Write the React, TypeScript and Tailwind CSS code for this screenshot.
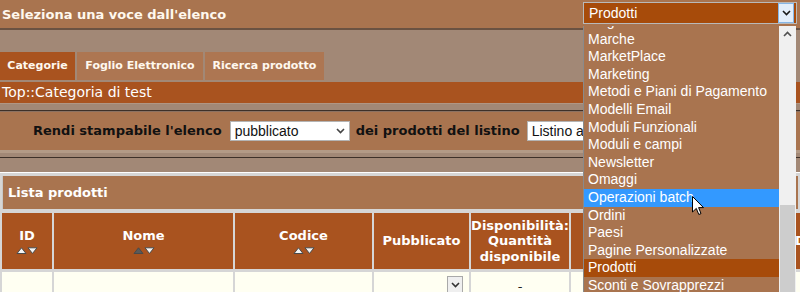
import React from "react"

const items = [
  "Lingue",
  "Marche",
  "MarketPlace",
  "Marketing",
  "Metodi e Piani di Pagamento",
  "Modelli Email",
  "Moduli Funzionali",
  "Moduli e campi",
  "Newsletter",
  "Omaggi",
  "Operazioni batch",
  "Ordini",
  "Paesi",
  "Pagine Personalizzate",
  "Prodotti",
  "Sconti e Sovrapprezzi",
]

function Chevron({ className = "" }: { className?: string }) {
  return (
    <svg width="9" height="6" viewBox="0 0 9 6" className={className}>
      <path d="M1 1 L4.5 4.5 L8 1" fill="none" stroke="currentColor" strokeWidth="1.6" />
    </svg>
  )
}

function SortArrows({ upDark = false }: { upDark?: boolean }) {
  return (
    <svg width="22" height="7" viewBox="0 0 22 7" className="mt-[3px]">
      <path d="M1 6.5 L5.5 0.8 L10 6.5 Z" fill={upDark ? "#5a5a5a" : "#f4f4f4"} stroke="#4a4a4a" strokeWidth="1" />
      <path d="M12 0.8 L21 0.8 L16.5 6.5 Z" fill="#f4f4f4" stroke="#4a4a4a" strokeWidth="1" />
    </svg>
  )
}

function HeadCell({ w, children }: { w: string; children?: React.ReactNode }) {
  return (
    <div className={`${w} shrink-0 h-full bg-[#a9531f] flex flex-col items-center justify-center text-center text-white font-bold text-[13px] leading-[15.5px]`}>
      {children}
    </div>
  )
}

export default function App() {
  return (
    <div className="relative w-[800px] h-[292px] overflow-hidden bg-[#a28876] font-['DejaVu_Sans',Verdana,sans-serif]">
      {/* top bar */}
      <div className="h-[30px] bg-[#a9744f] border-b-2 border-[#6a5242] flex items-start justify-between pl-[2px] pr-[3px]">
        <span className="mt-[5px] text-[#fff8ee] font-bold text-[13px]">Seleziona una voce dall'elenco</span>
        <div className="mt-[2px] w-[214px] h-[22px] border border-[#b9b9b9] bg-[#a74b0a] flex items-center justify-between font-['Liberation_Sans',Arial,sans-serif] text-[14px] text-white">
          <span className="pl-[5px]">Prodotti</span>
          <div className="w-[16px] h-[20px] mr-[2px] bg-[#e3eefa] border border-[#86b6e6] flex items-center justify-center text-[#1a1a1a]">
            <Chevron />
          </div>
        </div>
      </div>

      {/* tabs */}
      <div className="h-[22px]" />
      <div className="h-[28px] flex gap-[2px] text-[11px] font-bold text-[#fff8ee]">
        <div className="w-[75px] bg-[#a9531f] flex items-center justify-center">Categorie</div>
        <div className="w-[126px] bg-[#ad7652] flex items-center justify-center">Foglio Elettronico</div>
        <div className="w-[119px] bg-[#ad7652] flex items-center justify-center">Ricerca prodotto</div>
      </div>
      <div className="h-[2px]" />
      <div className="h-[21px] bg-[#a9531f] flex items-center pl-[2px] text-[14px] text-white">Top::Categoria di test</div>

      {/* print controls */}
      <div className="h-[7px] border-t border-[#b09684]" />
      <div className="h-[2px] bg-[#3e3028] border-b border-[#8c7262]" />
      <div className="h-[38px] bg-[#a9744f] flex items-center pl-[33px] text-[13px] font-bold text-[#111]">
        <span>Rendi stampabile l'elenco</span>
        <div className="ml-[8px] w-[120px] h-[20px] bg-white border border-[#b4b4b4] flex items-center justify-between px-[4px] font-normal font-['Liberation_Sans',Arial,sans-serif] text-[14px]">
          <span>pubblicato</span>
          <Chevron className="text-[#444]" />
        </div>
        <span className="ml-[6px]">dei prodotti del listino</span>
        <div className="ml-[7px] w-[160px] h-[20px] bg-white border border-[#b4b4b4] flex items-center px-[4px] font-normal font-['Liberation_Sans',Arial,sans-serif] text-[14px]">
          <span>Listino al pubblico</span>
        </div>
      </div>
      <div className="h-[3px] bg-[#b39a86]" />
      <div className="h-[4px]" />
      <div className="h-[1px] bg-[#3e3028]" />
      <div className="h-[14px]" />

      {/* product list */}
      <div className="border-t border-white bg-[#d6d6d6] pl-[2px] pt-[3px] flex flex-col">
        <div className="h-[33px] mr-[2px] bg-[#a9744f] border-l border-[#c8c8c8] flex items-center pl-[5px] text-[13px] font-bold text-white">Lista prodotti</div>
        <div className="h-[4px]" />
        <div className="h-[56px] flex gap-[2px]">
          <HeadCell w="w-[50px]">ID<SortArrows /></HeadCell>
          <HeadCell w="w-[179px]">Nome<SortArrows upDark /></HeadCell>
          <HeadCell w="w-[137px]">Codice<SortArrows /></HeadCell>
          <HeadCell w="w-[95px]">Pubblicato</HeadCell>
          <HeadCell w="w-[98px]">Disponibilità:<br />Quantità<br />disponibile</HeadCell>
          <HeadCell w="w-[220px]">Prezzo</HeadCell>
          <div className="w-[120px] shrink-0 h-full bg-[#a9531f] flex items-center pl-[2px] text-white font-bold text-[13px]">Data</div>
        </div>
        <div className="h-[3px]" />
        <div className="h-[30px] flex gap-[2px]">
          <div className="w-[50px] shrink-0 bg-[#fffff2]" />
          <div className="w-[179px] shrink-0 bg-[#fffff2]" />
          <div className="w-[137px] shrink-0 bg-[#fffff2]" />
          <div className="w-[95px] shrink-0 bg-[#fffff2] flex justify-end pr-[6px] pt-[4px]">
            <div className="w-[16px] h-[18px] bg-[#efefef] border border-[#a9a9a9] flex items-center justify-center text-[#333]">
              <Chevron />
            </div>
          </div>
          <div className="w-[98px] shrink-0 bg-[#fffff2] text-center text-[13px] pt-[5px] text-[#222]">-</div>
          <div className="w-[220px] shrink-0 bg-[#fffff2]" />
          <div className="w-[120px] shrink-0 bg-[#fffff2]" />
        </div>
      </div>

      {/* open select list */}
      <div className="absolute left-[583px] top-[26px] w-[213px] h-[266px] overflow-hidden bg-[#a9744f] border-l border-[#8a8a8a] font-['Liberation_Sans',Arial,sans-serif] text-[14px] text-white">
        <div className="mt-[-13px] mr-[17px]">
          {items.map((it) => (
            <div
              key={it}
              className={`h-[17.6px] leading-[17.6px] pl-[4px] whitespace-nowrap ${
                it === "Operazioni batch" ? "bg-[#3399ff]" : it === "Prodotti" ? "bg-[#a74b0a]" : ""
              }`}
            >
              {it}
            </div>
          ))}
        </div>
        <div className="absolute right-0 top-0 w-[17px] h-full bg-[#f0f0f0] flex flex-col">
          <div className="h-[16px] flex items-center justify-center text-[#505050]">
            <Chevron className="rotate-180" />
          </div>
          <div className="flex-1" />
          <div className="h-[87px] mx-[1px] bg-[#cdcdcd]" />
        </div>
      </div>

      {/* mouse pointer */}
      <svg className="absolute left-[692px] top-[196px]" width="13" height="21" viewBox="0 0 13 21">
        <path d="M0.5 0.5 L0.5 16 L4.3 12.4 L6.8 18.5 L9 17.6 L6.6 11.6 L11.5 11.6 Z" fill="#fff" stroke="#000" strokeWidth="1" strokeLinejoin="round" />
      </svg>
    </div>
  )
}
